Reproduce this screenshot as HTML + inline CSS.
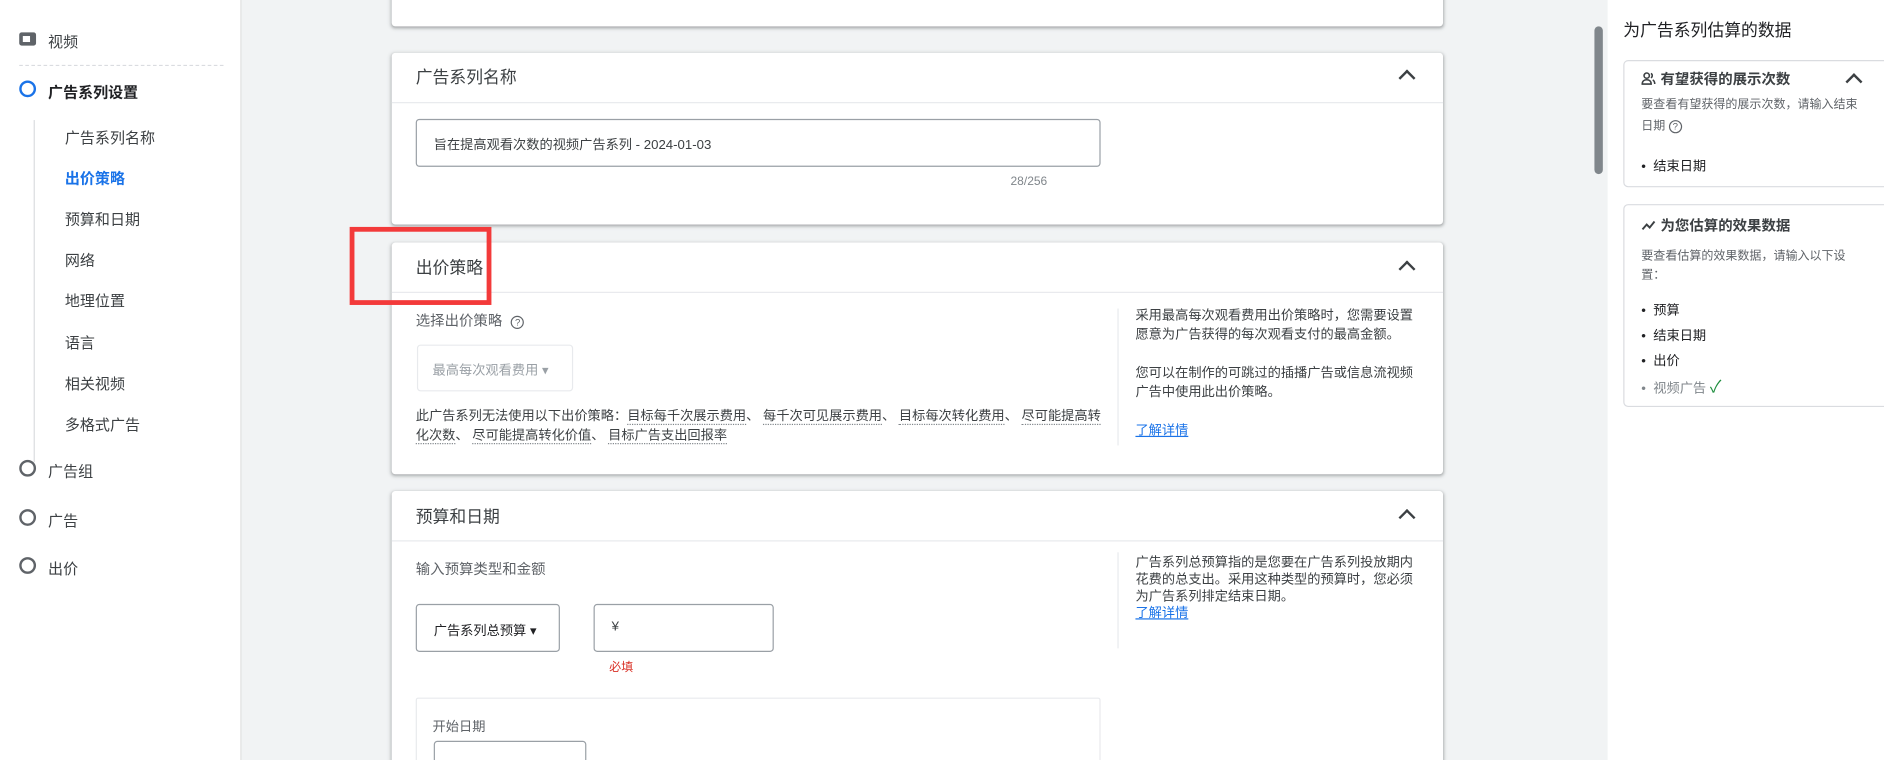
<!DOCTYPE html>
<html><head><meta charset="utf-8"><style>
*{margin:0;padding:0;box-sizing:border-box}
html,body{width:1884px;height:760px;overflow:hidden;background:#fff}
#w{position:absolute;left:0;top:0;width:1568px;height:633px;overflow:hidden;transform:scale(1.20153,1.20063);transform-origin:0 0;font-family:"Liberation Sans","Noto Sans CJK SC",sans-serif;color:#3c4043;background:#f1f3f4}
.a{position:absolute;white-space:nowrap}
.card{position:absolute;background:#fff;border-radius:3px;box-shadow:0 1px 2px rgba(60,64,67,.3),0 1px 3px 1px rgba(60,64,67,.15)}
.t{font-size:12.5px;color:#3c4043}
.s{font-size:12px;color:#5f6368}
.x{font-size:11px;color:#3c4043;line-height:16px;white-space:normal}
.circ{position:absolute;width:14px;height:14px;border:2px solid #5f6368;border-radius:50%}
.chev{position:absolute;width:10px;height:10px;border-left:2px solid #3c4043;border-top:2px solid #3c4043;transform:rotate(45deg)}
.hl{position:absolute;left:0;right:0;height:1px;background:#e8eaed}
.u{border-bottom:1px dotted #80868b}
.lnk{color:#1a73e8;text-decoration:underline;font-size:11px}
.box{position:absolute;border:1px solid #9aa0a6;border-radius:3px;background:#fff}
</style></head><body><div id="w">
<div class="a" style="left:0;top:0;width:201px;height:633px;background:#fff;border-right:1px solid #e0e0e0"></div>
<div class="a" style="left:16px;top:27px;width:14px;height:11px;background:#5f6368;border-radius:2px"><div style="position:absolute;left:3px;top:3px;width:6px;height:5px;background:#fff"></div></div>
<div class="a t" style="left:40px;top:24px">视频</div>
<div class="a" style="left:16px;top:54px;width:170px;border-top:1px dashed #dadce0"></div>
<div class="circ" style="left:16px;top:67px;border-color:#1a73e8"></div>
<div class="a t" style="left:40px;top:66px;font-weight:bold;color:#202124">广告系列设置</div>
<div class="a" style="left:28px;top:100px;width:1px;height:285px;background:#dadce0"></div>
<div class="a t" style="left:54px;top:104px">广告系列名称</div>
<div class="a t" style="left:54px;top:138px;color:#1a73e8;font-weight:bold">出价策略</div>
<div class="a t" style="left:54px;top:172px">预算和日期</div>
<div class="a t" style="left:54px;top:206px">网络</div>
<div class="a t" style="left:54px;top:240px">地理位置</div>
<div class="a t" style="left:54px;top:275px">语言</div>
<div class="a t" style="left:54px;top:309px">相关视频</div>
<div class="a t" style="left:54px;top:343px">多格式广告</div>
<div class="circ" style="left:16px;top:383px"></div><div class="a t" style="left:40px;top:382px">广告组</div>
<div class="circ" style="left:16px;top:424px"></div><div class="a t" style="left:40px;top:423px">广告</div>
<div class="circ" style="left:16px;top:464px"></div><div class="a t" style="left:40px;top:463px">出价</div>
<div class="card" style="left:326px;top:-10px;width:875px;height:32px"></div>
<div class="card" style="left:326px;top:44px;width:875px;height:143px">
 <div class="a" style="left:20px;top:10px;font-size:14px">广告系列名称</div>
 <div class="chev" style="left:840px;top:16px"></div>
 <div class="hl" style="top:41px"></div>
 <div class="box" style="left:20px;top:55px;width:570px;height:40px"><div class="a" style="left:14px;top:12px;font-size:11px">旨在提高观看次数的视频广告系列 - 2024-01-03</div></div>
 <div class="a" style="left:515px;top:102px;font-size:10px;color:#80868b">28/256</div>
</div>
<div class="card" style="left:326px;top:202px;width:875px;height:193px">
 <div class="a" style="left:20px;top:11px;font-size:14px">出价策略</div>
 <div class="chev" style="left:840px;top:17px"></div>
 <div class="hl" style="top:41px"></div>
 <div class="a s" style="left:20px;top:56px">选择出价策略 <span style="display:inline-block;width:11px;height:11px;border:1px solid #5f6368;border-radius:50%;font-size:8px;text-align:center;line-height:10px;margin-left:4px">?</span></div>
 <div class="a" style="left:21px;top:85px;width:130px;height:39px;border:1px solid #e8eaed;border-radius:3px"><div class="a" style="left:12px;top:12px;font-size:11px;color:#9aa0a6">最高每次观看费用 ▾</div></div>
 <div class="a x" style="left:20px;top:137px;width:572px">此广告系列无法使用以下出价策略：<span class="u">目标每千次展示费用</span>、 <span class="u">每千次可见展示费用</span>、 <span class="u">目标每次转化费用</span>、 <span class="u">尽可能提高转化次数</span>、 <span class="u">尽可能提高转化价值</span>、 <span class="u">目标广告支出回报率</span></div>
 <div class="a" style="left:604px;top:55px;width:1px;height:114px;background:#e8eaed"></div>
 <div class="a x" style="left:619px;top:53px;width:240px">采用最高每次观看费用出价策略时，您需要设置愿意为广告获得的每次观看支付的最高金额。<br><br>您可以在制作的可跳过的插播广告或信息流视频广告中使用此出价策略。<br><br><span class="lnk">了解详情</span></div>
</div>
<div class="card" style="left:326px;top:409px;width:875px;height:240px">
 <div class="a" style="left:20px;top:11px;font-size:14px">预算和日期</div>
 <div class="chev" style="left:840px;top:17px"></div>
 <div class="hl" style="top:41px"></div>
 <div class="a s" style="left:20px;top:56px">输入预算类型和金额</div>
 <div class="box" style="left:20px;top:94px;width:120px;height:40px"><div class="a" style="left:14px;top:13px;font-size:11px;color:#202124">广告系列总预算 ▾</div></div>
 <div class="box" style="left:168px;top:94px;width:150px;height:40px"><div class="a" style="left:14px;top:12px;font-size:11px">¥</div></div>
 <div class="a" style="left:181px;top:138px;font-size:10px;color:#d93025">必填</div>
 <div class="a" style="left:20px;top:172px;width:570px;height:80px;border:1px solid #e8eaed;border-radius:2px"></div>
 <div class="a s" style="left:34px;top:188px;font-size:11px">开始日期</div>
 <div class="box" style="left:35px;top:208px;width:127px;height:40px"></div>
 <div class="a" style="left:604px;top:51px;width:1px;height:80px;background:#e8eaed"></div>
 <div class="a x" style="left:619px;top:53px;width:240px;line-height:14px">广告系列总预算指的是您要在广告系列投放期内花费的总支出。采用这种类型的预算时，您必须为广告系列排定结束日期。<br><span class="lnk">了解详情</span></div>
</div>
<div class="a" style="left:1327px;top:22px;width:7px;height:123px;background:#80868b;border-radius:4px"></div>
<div class="a" style="left:1338px;top:0;width:230px;height:633px;background:#fff"></div>
<div class="a" style="left:1351px;top:15px;font-size:14px;color:#202124">为广告系列估算的数据</div>
<div class="a" style="left:1351px;top:50px;width:230px;height:106px;border:1px solid #dadce0;border-radius:4px">
 <div class="a" style="left:14px;top:6px;font-size:12px;font-weight:bold;color:#3c4043"><svg width="12" height="11" viewBox="0 0 12 11" style="vertical-align:-1px;margin-right:4px"><circle cx="4.5" cy="3" r="2.2" fill="none" stroke="#3c4043" stroke-width="1.3"/><path d="M0.8 10c0-2.5 1.8-3.6 3.7-3.6s3.7 1.1 3.7 3.6z" fill="none" stroke="#3c4043" stroke-width="1.3"/><path d="M8 1.2a2 2 0 010 3.6M9.5 6.6c1 .5 1.7 1.6 1.7 3.4" fill="none" stroke="#3c4043" stroke-width="1.3"/></svg>有望获得的展示次数</div>
 <div class="chev" style="left:186px;top:12px"></div>
 <div class="a x" style="left:14px;top:28px;width:188px;font-size:10px;color:#5f6368;line-height:18px">要查看有望获得的展示次数，请输入结束日期 <span style="display:inline-block;width:11px;height:11px;border:1px solid #5f6368;border-radius:50%;font-size:8px;text-align:center;line-height:10px">?</span></div>
 <div class="a" style="left:14px;top:79px;font-size:11px;color:#202124">•&nbsp; 结束日期</div>
</div>
<div class="a" style="left:1351px;top:170px;width:230px;height:169px;border:1px solid #dadce0;border-radius:4px">
 <div class="a" style="left:14px;top:8px;font-size:12px;font-weight:bold;color:#3c4043"><svg width="12" height="9" viewBox="0 0 12 9" style="vertical-align:0;margin-right:4px"><path d="M1 8l3.5-4 2.5 2.5L11 1.5" fill="none" stroke="#3c4043" stroke-width="1.6"/></svg>为您估算的效果数据</div>
 <div class="a x" style="left:14px;top:35px;width:180px;font-size:10px;color:#5f6368">要查看估算的效果数据，请输入以下设置：</div>
 <div class="a" style="left:14px;top:78px;font-size:11px;color:#202124;line-height:21px;white-space:normal">•&nbsp; 预算<br>•&nbsp; 结束日期<br>•&nbsp; 出价<br><span style="color:#80868b">•&nbsp; 视频广告</span> <span style="color:#1e8e3e;font-size:14px">✓</span></div>
</div>
<div class="a" style="left:291px;top:189px;width:118px;height:65px;border:4px solid #f33a3a"></div>
</div></body></html>
